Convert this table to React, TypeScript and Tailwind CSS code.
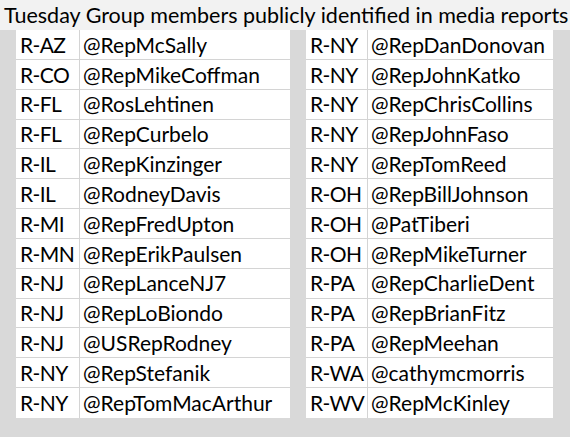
import React from "react";

const left: [string, string][] = [
  ["R-AZ", "@RepMcSally"],
  ["R-CO", "@RepMikeCoffman"],
  ["R-FL", "@RosLehtinen"],
  ["R-FL", "@RepCurbelo"],
  ["R-IL", "@RepKinzinger"],
  ["R-IL", "@RodneyDavis"],
  ["R-MI", "@RepFredUpton"],
  ["R-MN", "@RepErikPaulsen"],
  ["R-NJ", "@RepLanceNJ7"],
  ["R-NJ", "@RepLoBiondo"],
  ["R-NJ", "@USRepRodney"],
  ["R-NY", "@RepStefanik"],
  ["R-NY", "@RepTomMacArthur"],
];

const right: [string, string][] = [
  ["R-NY", "@RepDanDonovan"],
  ["R-NY", "@RepJohnKatko"],
  ["R-NY", "@RepChrisCollins"],
  ["R-NY", "@RepJohnFaso"],
  ["R-NY", "@RepTomReed"],
  ["R-OH", "@RepBillJohnson"],
  ["R-OH", "@PatTiberi"],
  ["R-OH", "@RepMikeTurner"],
  ["R-PA", "@RepCharlieDent"],
  ["R-PA", "@RepBrianFitz"],
  ["R-PA", "@RepMeehan"],
  ["R-WA", "@cathymcmorris"],
  ["R-WV", "@RepMcKinley"],
];

function Table({ rows, width, col1 }: { rows: [string, string][]; width: string; col1: string }) {
  return (
    <div className={`flex flex-col bg-white ${width}`}>
      {rows.map(([s, h], i) => (
        <div
          key={i}
          className={`flex h-[29.85px] items-center whitespace-nowrap ${i < rows.length - 1 ? "border-b border-[#d4d4d4]" : ""}`}
        >
          <div className={`${col1} shrink-0 h-full flex items-center pl-[4px] tracking-[-0.6px] border-r border-[#d4d4d4]`}>{s}</div>
          <div className="flex-1 h-full flex items-center pl-[3px]">{h}</div>
        </div>
      ))}
    </div>
  );
}

export default function App() {
  return (
    <div
      className="w-[570px] h-[437px] bg-[#d9d9d9] flex flex-col text-black text-[21px] overflow-hidden"
      style={{ fontFamily: "Lato, 'Open Sans', sans-serif" }}
    >
      <div className="h-[30px] bg-[#f2f2f2] flex items-center pl-[4px] shrink-0 text-[21.5px] whitespace-nowrap">
        Tuesday Group members publicly identified in media reports
      </div>
      <div className="flex pl-[16px] gap-[16px]">
        <Table rows={left} width="w-[274px]" col1="w-[64px]" />
        <Table rows={right} width="w-[247px]" col1="w-[62px]" />
      </div>
    </div>
  );
}
